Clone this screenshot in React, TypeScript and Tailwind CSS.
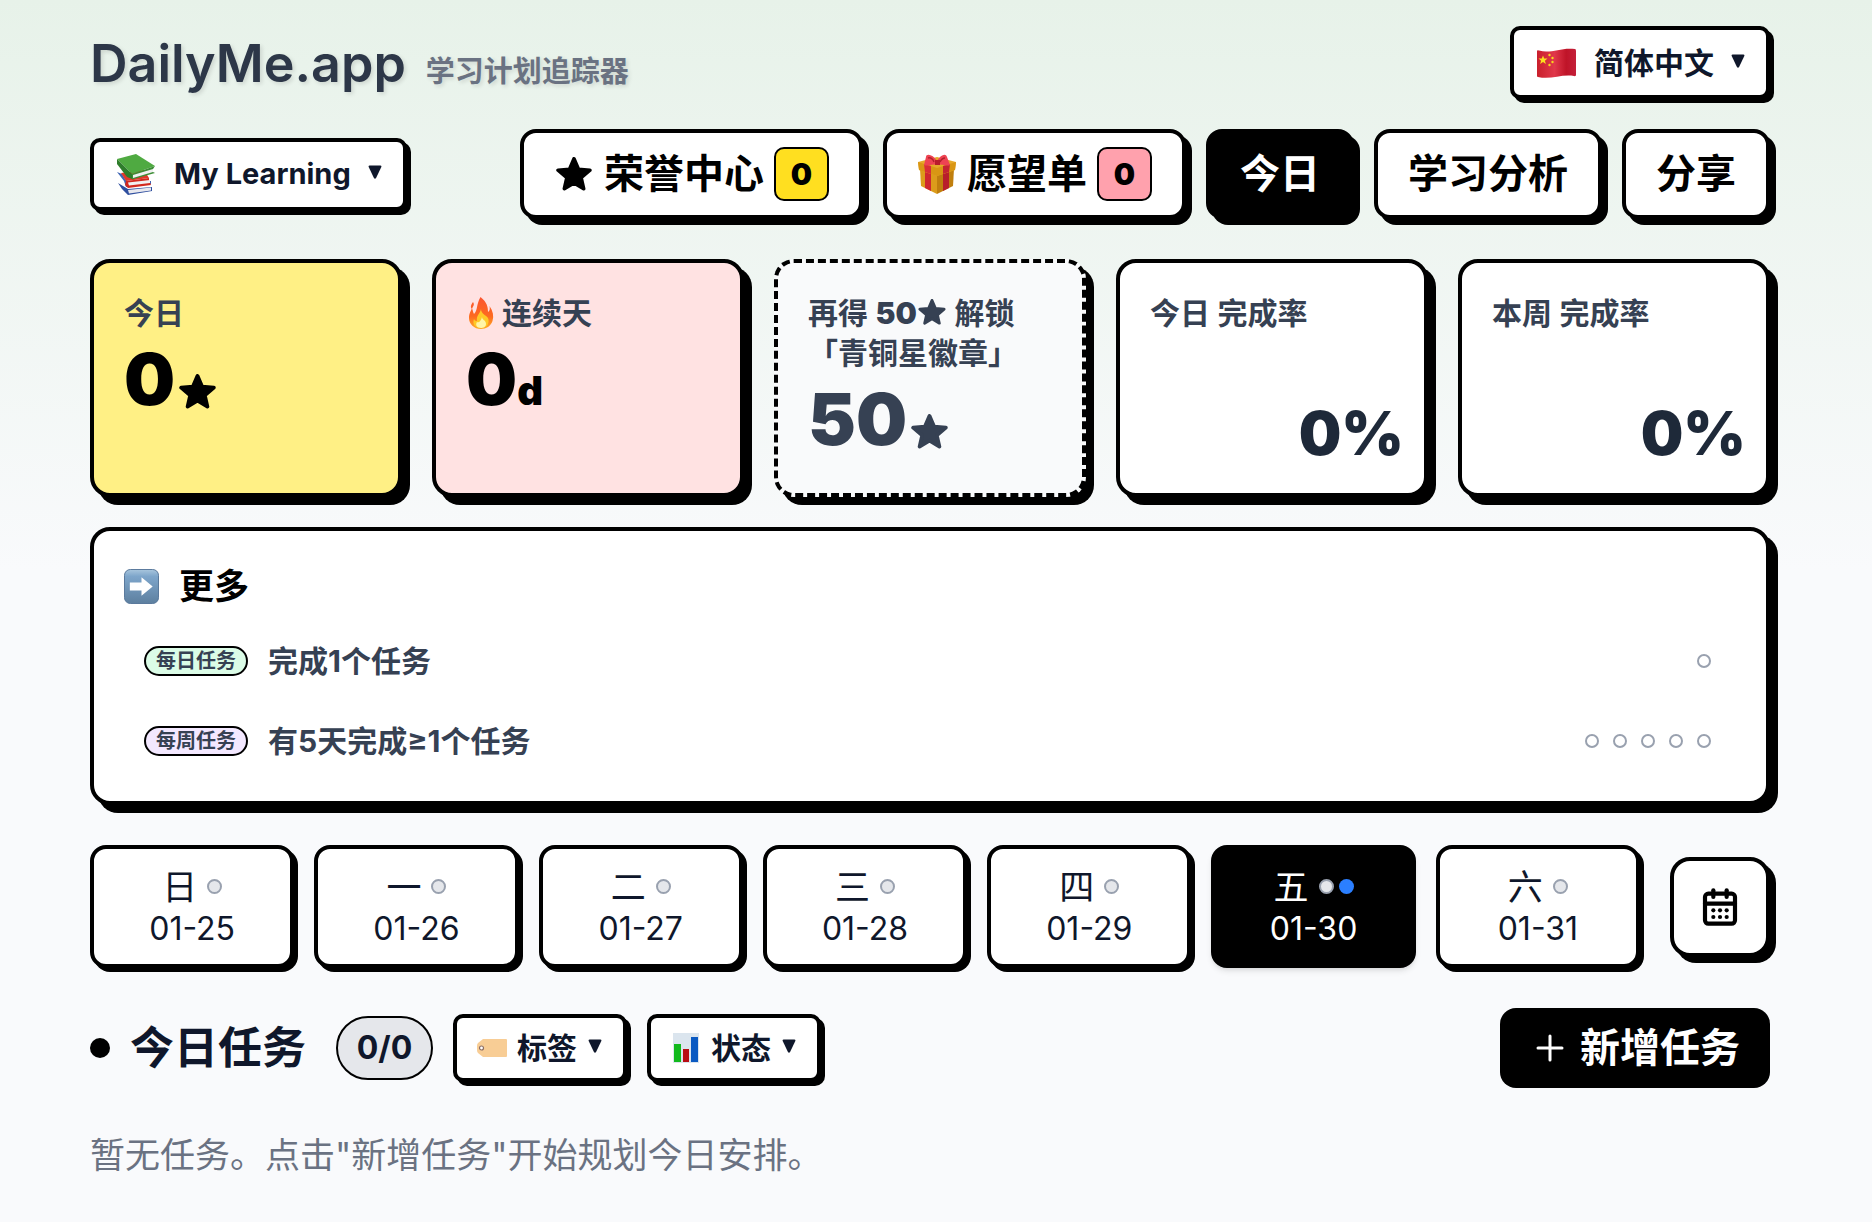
import type { ReactNode } from 'react';
import { CalendarDays } from 'lucide-react';

const Star = ({ className }: { className: string }) => (
    <svg viewBox="2 3 20 19" className={className} fill="currentColor" stroke="currentColor" strokeWidth="2" strokeLinejoin="round" aria-hidden="true">
        <path d="M12 4 14.5 9.8 20.9 10.4 16 14.6 17.4 20.7 12 17.5 6.6 20.7 8 14.6 3.1 10.4 9.5 9.8Z" />
    </svg>
);

const Books = () => (
    <svg viewBox="0 0 44 44" className="w-11 h-11 shrink-0" aria-hidden="true">
        <path d="M4 31 8 37 14 43 38 39 38 35 14 37Z" fill="#2f4f9f" />
        <path d="M14 38 37 35.500 37 38.500 15 41.500Z" fill="#e8e8ee" />
        <path d="M3 20 10 29 12 35 37 32 37 29 13 30 8 22Z" fill="#3f66b5" />
        <path d="M7 21 12 29 35 26 30 18Z" fill="#e2382a" />
        <path d="M12 29 35 26 35 28.500 37 33 14 36 11 33Z" fill="#d2281e" />
        <path d="M14 30.500 36 28 36 31 15 33.500Z" fill="#f1eff0" />
        <path d="M3 7 22 2 41 14 18 22Z" fill="#4faa41" />
        <path d="M3 7 18 22 18 27 13 25 3 12Z" fill="#2e7d2b" />
        <path d="M18 22 41 14 39 17 39 20 41 21 18 27.500Z" fill="#3b8d35" />
        <path d="M19 23 39 17 39 20 19 26Z" fill="#f0f0f0" />
    </svg>
);

const Flag = () => (
    <svg viewBox="0 0 44 34" className="w-11 h-[34px] shrink-0" aria-hidden="true">
        <defs>
            <linearGradient id="flagRed" x1="0" y1="0" x2="1" y2="0">
                <stop offset="0" stopColor="#c9202c" />
                <stop offset=".45" stopColor="#e0374a" />
                <stop offset=".75" stopColor="#bf1428" />
                <stop offset="1" stopColor="#c4203a" />
            </linearGradient>
        </defs>
        <path d="M3 5Q3 4 5 4.500C17 8 27 1 41 3Q42 3 42 5V29Q42 30.500 40 30C27 28 17 34 4 31Q3 31 3 30Z" fill="url(#flagRed)" />
        <path d="M9 9.500 10.200 12.600 13.500 12.600 10.900 14.700 11.900 18 9 16 6.100 18 7.100 14.700 4.500 12.600 7.800 12.600Z" fill="#fbe01e" />
        <g fill="#f7d51d">
            <circle cx="15.500" cy="9" r="1.200" />
            <circle cx="18.500" cy="12" r="1.200" />
            <circle cx="18.500" cy="16" r="1.200" />
            <circle cx="15.500" cy="19" r="1.200" />
        </g>
    </svg>
);

const Gift = () => (
    <svg viewBox="0 0 40 40" className="w-10 h-10 shrink-0" aria-hidden="true">
        <path d="M3 15 20 21 20 40 4 32Z" fill="#dc9c1b" />
        <path d="M37 15 20 21 20 40 36 32Z" fill="#c07f0e" />
        <path d="M8 17 14 19 14 37 8 34Z" fill="#cf2730" />
        <path d="M26 19 32 17 32 34 26 37Z" fill="#b81e2b" />
        <path d="M1 8 20 3 39 8 38 16 20 22 2 16Z" fill="#e6a92a" />
        <path d="M1 8 20 14 39 8 38 16 20 22 2 16Z" fill="#d99614" />
        <path d="M7 10 14 12 14 20 8 18Z" fill="#d92d37" />
        <path d="M33 10 26 12 26 20 32 18Z" fill="#c42431" />
        <path d="M20 7C16 0 9-1 9 3L7 11C10 13 16 9 20 11 24 9 30 13 33 11L30 3C29-1 24 0 20 7Z" fill="#ee4352" />
        <path d="M18 6h5v5h-5z" fill="#b91c2c" />
        <path d="M11 4Q15 3 17 8M28 4Q25 4 23 8" stroke="#b3202d" strokeWidth="1.500" fill="none" />
    </svg>
);

const Fire = () => (
    <svg viewBox="-2 0 28 32" className="w-7 h-8 shrink-0" aria-hidden="true">
        <defs>
            <linearGradient id="flame" x1="0" y1="0" x2="0" y2="1">
                <stop offset="0" stopColor="#fb5530" />
                <stop offset=".6" stopColor="#fd6a20" />
                <stop offset="1" stopColor="#ffad25" />
            </linearGradient>
        </defs>
        <path d="M12.500 0C19 5 20 10 20 15 22 14 22 11 21.500 9 25 14 26 19 24.500 24 23 29 18 32 13 32 6 32 1 27 1 21 1 16 3 14 4 11 5 14 5 15 6 17 10 13 8 8 12.500 0ZM5 5C7 8 5 9 4 12 2 10 3 8 5 5Z" fill="url(#flame)" />
        <path d="M13 12C13 17 18 18 20 21 22 26 19 31 13 31 7 31 4 27 6 22 7 24 8 24 9 24 8 18 12 17 13 12Z" fill="#ffc928" />
        <path d="M14 20C14 23 18 23 18 27 18 30 15 31 13 31 9 31 7 28 9 25 11 26 13 24 14 20Z" fill="#fff5a8" />
    </svg>
);

const ArrowTile = () => (
    <svg viewBox="0 0 36 36" className="w-[35px] h-[35px] shrink-0" aria-hidden="true">
        <defs>
            <linearGradient id="tile" x1="0" y1="0" x2="0" y2="1">
                <stop offset="0" stopColor="#a9c6dd" />
                <stop offset=".2" stopColor="#7ea6cb" />
                <stop offset="1" stopColor="#5d7f9f" />
            </linearGradient>
        </defs>
        <rect x=".5" y=".5" width="35" height="35" rx="6" fill="url(#tile)" stroke="#57779a" />
        <path d="M6 14h12V8.500L29.500 18 18 27.500V22H6Z" fill="#fff" />
    </svg>
);

const Tag = () => (
    <svg viewBox="0 0 30 30" className="w-[30px] h-[30px] shrink-0" aria-hidden="true">
        <path d="M6 6H29Q30 6 30 7V23Q30 24 29 24H6L1 20Q0 19 0 17V13Q0 11 1 10Z" fill="#f8cd95" />
        <circle cx="4.500" cy="15" r="2" fill="#fff" stroke="#8d6e63" strokeWidth="1.200" />
    </svg>
);

const BarChart = () => (
    <svg viewBox="0 0 30 30" className="w-[30px] h-[30px] shrink-0" aria-hidden="true">
        <rect x="2" y="0" width="26" height="30" fill="#dbe5ee" />
        <path d="M3 11h7v18H3Z" fill="#12b91d" />
        <path d="M12 16h6v13h-6Z" fill="#b80d14" />
        <path d="M20 4h7v25h-7Z" fill="#0b5ac2" />
    </svg>
);

const Caret = () => (
    <svg viewBox="0 0 16 16" className="w-4 h-4 shrink-0 -mt-1 pointer-events-none" fill="currentColor" aria-hidden="true">
        <path d="M2.500 1.500H13.500Q15 1.500 14.300 3L9.200 13.800Q8 15.500 6.800 13.800L1.700 3Q1 1.500 2.500 1.500Z" />
    </svg>
);

type DropdownProps = { label: string; value: string; icon: ReactNode; small?: boolean; textSize?: string };

const Dropdown = ({ label, value, icon, small, textSize = 'text-[30px]' }: DropdownProps) => (
    <label className={`flex items-center bg-white border-4 border-black rounded-[10px] px-5 shadow-[4px_4px_0_#000] text-slate-900 ${small ? 'h-[68px] gap-[10px]' : 'h-[73px] gap-4'}`}>
        {icon}
        <select aria-label={label} className={`appearance-none bg-transparent leading-10 font-bold outline-none ${textSize}`}>
            <option>{value}</option>
        </select>
        <Caret />
    </label>
);

const NavButton = ({ active, children }: { active?: boolean; children: ReactNode }) => (
    <button className={`flex items-center gap-[10px] h-[90px] px-[30px] border-4 border-black rounded-2xl shadow-[6px_6px_0_#000] text-[40px] leading-none font-bold whitespace-nowrap ${active ? 'bg-black text-white' : 'bg-white text-black'}`}>
        {children}
    </button>
);

const Count = ({ color, children }: { color: string; children: ReactNode }) => (
    <span className={`flex items-center justify-center w-[55px] h-[54px] border-2 border-black rounded-[10px] text-[30px] font-black ${color}`}>{children}</span>
);

const StatCard = ({ label, className, children }: { label: ReactNode; className: string; children: ReactNode }) => (
    <div className={`flex flex-col h-[238px] border-4 border-black rounded-[20px] p-[30px] shadow-[8px_8px_0_#000] ${className}`}>
        <div className="text-[30px] leading-10 font-semibold text-gray-700">{label}</div>
        {children}
    </div>
);

const StarCount = ({ value }: { value: number }) => (
    <div className="flex items-end gap-1 mt-[10px] text-[72px] leading-[72px] font-black">
        {value}
        <Star className="w-[37px] h-[35px] mb-[6px]" />
    </div>
);

const Rate = ({ value }: { value: string }) => (
    <div className="mt-auto text-right text-[60px] leading-[60px] font-black text-gray-800">{value}</div>
);

const Goal = ({ kind, color, text, steps }: { kind: string; color: string; text: string; steps: number }) => (
    <li className="flex items-center gap-5 h-[60px] px-5">
        <span className={`flex items-center h-[30px] px-[10px] border-2 border-black rounded-full text-xl leading-none font-semibold text-gray-700 ${color}`}>{kind}</span>
        <span className="text-[30px] leading-10 font-bold text-gray-700">{text}</span>
        <span className="flex gap-1 ml-auto">
            {Array.from({ length: steps }, (_, i) => (
                <span key={i} className="flex items-center justify-center w-6 h-6">
                    <span className="w-[14px] h-[14px] border-2 border-[#99a1af] rounded-full" />
                </span>
            ))}
        </span>
    </li>
);

const days = [
    { name: '日', date: '01-25' },
    { name: '一', date: '01-26' },
    { name: '二', date: '01-27' },
    { name: '三', date: '01-28' },
    { name: '四', date: '01-29' },
    { name: '五', date: '01-30', today: true },
    { name: '六', date: '01-31' },
];

const App = () => {
    return (
        <div className="min-h-screen bg-[#f9fafc] bg-[linear-gradient(180deg,#e7f2e9_0px,#f9fafc_570px)] font-[Inter,'Noto_Sans_CJK_SC',sans-serif]">
            <main className="pl-[90px] pr-[102px] pt-[26px] pb-10">
                <header className="flex items-center justify-between">
                    <div className="flex items-baseline gap-5 pt-[3px] [text-shadow:2px_2px_4px_rgba(0,0,0,0.12)]">
                        <h1 className="text-[52px] leading-[70px] font-semibold text-[#2d3748]">DailyMe.app</h1>
                        <span className="text-[29px] leading-10 font-semibold text-gray-500">学习计划追踪器</span>
                    </div>
                    <Dropdown label="语言" value="简体中文" icon={<Flag />} />
                </header>

                <div className="flex items-center justify-between mt-[30px]">
                    <Dropdown label="计划" value="My Learning" icon={<Books />} textSize="text-[29px]" />
                    <nav className="flex gap-5">
                        <NavButton>
                            <Star className="w-9 h-[34px] mx-[2px]" />
                            <span>荣誉中心</span>
                            <Count color="bg-[#ffdf20]">0</Count>
                        </NavButton>
                        <NavButton>
                            <Gift />
                            <span>愿望单</span>
                            <Count color="bg-[#ffa1ad]">0</Count>
                        </NavButton>
                        <NavButton active>今日</NavButton>
                        <NavButton>学习分析</NavButton>
                        <NavButton>分享</NavButton>
                    </nav>
                </div>

                {/* Stats */}
                <section className="grid grid-cols-5 gap-[30px] mt-10">
                    <StatCard label="今日" className="bg-[#fff085]">
                        <StarCount value={0} />
                    </StatCard>
                    <StatCard label={<span className="flex items-center gap-2"><Fire />连续天</span>} className="bg-[#ffe2e2]">
                        <div className="mt-[10px] text-[72px] leading-[72px] font-black">0<span className="text-[40px]">d</span></div>
                    </StatCard>
                    <StatCard
                        label={
                            <>
                                <span>再得 </span>
                                <span className="font-black">50</span>
                                <Star className="inline-block w-7 h-[26px] mx-px -mt-2" />
                                <span> 解锁 </span>
                                <span className="inline-block">「青铜星徽章」</span>
                            </>
                        }
                        className="bg-gray-50 border-dashed text-gray-700"
                    >
                        <StarCount value={50} />
                    </StatCard>
                    <StatCard label="今日 完成率" className="bg-white pr-5">
                        <Rate value="0%" />
                    </StatCard>
                    <StatCard label="本周 完成率" className="bg-white pr-5">
                        <Rate value="0%" />
                    </StatCard>
                </section>

                {/* Goals */}
                <section className="mt-[30px] bg-white border-4 border-black rounded-[20px] p-[30px] shadow-[8px_8px_0_#000]">
                    <h2 className="flex items-center gap-5 h-[50px] text-[35px] leading-none font-bold"><ArrowTile />更多</h2>
                    <ul className="flex flex-col gap-5 mt-5">
                        <Goal kind="每日任务" color="bg-green-100" text="完成1个任务" steps={1} />
                        <Goal kind="每周任务" color="bg-purple-100" text="有5天完成≥1个任务" steps={5} />
                    </ul>
                </section>

                {/* Week */}
                <section className="flex items-center gap-[30px] mt-10">
                    <div className="grid grid-cols-7 gap-5 grow">
                        {days.map((day) => (
                            <button key={day.date} className={`flex flex-col items-center justify-center h-[123px] pt-[2px] border-4 border-black rounded-2xl ${day.today ? 'bg-black text-white shadow-md' : 'bg-white text-slate-900 shadow-[4px_4px_0_#000]'}`}>
                                <span className="flex items-center gap-[10px] text-[35px] leading-[42px]">
                                    {day.name}
                                    <span className="flex gap-[5px]">
                                        <span className="w-[15px] h-[15px] bg-gray-200 border-2 border-[#99a1af] rounded-full" />
                                        {day.today && <span className="w-[15px] h-[15px] bg-[#2b7fff] rounded-full" />}
                                    </span>
                                </span>
                                <span className="text-[32px] leading-[42px]">{day.date}</span>
                            </button>
                        ))}
                    </div>
                    <button aria-label="日历" className="flex items-center justify-center w-[100px] h-[100px] shrink-0 bg-white border-4 border-black rounded-[20px] shadow-[6px_6px_0_#000]">
                        <CalendarDays size={40} strokeWidth={2.5} />
                    </button>
                </section>

                {/* Tasks */}
                <section className="flex items-center mt-10">
                    <span className="w-5 h-5 bg-black rounded-full" />
                    <h2 className="ml-5 text-[44px] leading-[60px] font-bold text-slate-900">今日任务</h2>
                    <span className="flex items-center justify-center w-[97px] h-16 ml-[30px] bg-gray-200 border-2 border-black rounded-full text-[32px] leading-none font-bold text-slate-900">0/0</span>
                    <div className="flex gap-5 ml-5">
                        <Dropdown small label="标签" value="标签" icon={<Tag />} />
                        <Dropdown small label="状态" value="状态" icon={<BarChart />} />
                    </div>
                    <button className="flex items-center gap-[10px] h-20 px-[30px] ml-auto bg-black rounded-2xl text-[40px] leading-none font-bold text-white">
                        <svg viewBox="0 0 40 40" className="w-10 h-10" stroke="currentColor" strokeWidth="3" strokeLinecap="round" aria-hidden="true">
                            <path d="M20 8V32M8 20H32" />
                        </svg>
                        新增任务
                    </button>
                </section>
                <p className="mt-[42px] text-[35px] leading-[50px] text-gray-500">暂无任务。点击"新增任务"开始规划今日安排。</p>
            </main>
        </div>
    );
}

export default App;
